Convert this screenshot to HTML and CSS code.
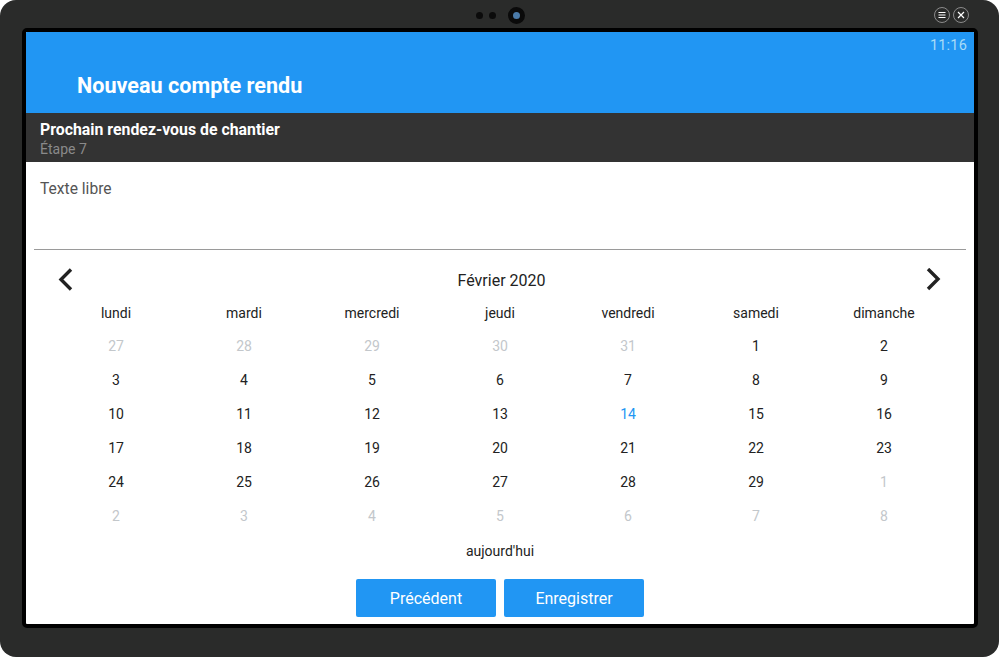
FILE: index.html
```html
<!DOCTYPE html>
<html lang="fr">
<head>
<meta charset="utf-8">
<title>Nouveau compte rendu</title>
<link rel="stylesheet" href="styles.css">
</head>
<body>
<div class="device">
  <div class="bezel-top">
    <span class="dot"></span><span class="dot"></span><span class="cam"></span>
  </div>
  <div class="win-btns">
    <span class="wbtn"><svg width="8" height="8" viewBox="0 0 8 8"><path d="M0.5 1.5h7M0.5 4h7M0.5 6.5h7" stroke="#fff" stroke-width="1.2"/></svg></span>
    <span class="wbtn"><svg width="8" height="8" viewBox="0 0 8 8"><path d="M1 1l6 6M7 1l-6 6" stroke="#fff" stroke-width="1.2"/></svg></span>
  </div>
  <div class="screen">
    <header class="appbar">
      <div class="clock">11:16</div>
      <h1 class="title">Nouveau compte rendu</h1>
    </header>
    <div class="subbar">
      <div class="sub-title">Prochain rendez-vous de chantier</div>
      <div class="sub-step">Étape 7</div>
    </div>
    <div class="field"><span class="field-label">Texte libre</span></div>
    <div class="calendar">
      <div class="cal-nav">
        <svg class="chev chev-prev" width="16" height="24" viewBox="0 0 16 24"><polyline points="13,1.5 3,11.5 13,21.5" fill="none" stroke="#222" stroke-width="3.4"/></svg>
        <span class="month">Février 2020</span>
        <svg class="chev chev-next" width="16" height="24" viewBox="0 0 16 24"><polyline points="3,1 13,11 3,21" fill="none" stroke="#222" stroke-width="3.4"/></svg>
      </div>
      <div class="cal-grid weekdays">
        <span>lundi</span><span>mardi</span><span>mercredi</span><span>jeudi</span><span>vendredi</span><span>samedi</span><span>dimanche</span>
      </div>
      <div class="cal-grid days">
        <span class="out">27</span><span class="out">28</span><span class="out">29</span><span class="out">30</span><span class="out">31</span><span>1</span><span>2</span>
        <span>3</span><span>4</span><span>5</span><span>6</span><span>7</span><span>8</span><span>9</span>
        <span>10</span><span>11</span><span>12</span><span>13</span><span class="today">14</span><span>15</span><span>16</span>
        <span>17</span><span>18</span><span>19</span><span>20</span><span>21</span><span>22</span><span>23</span>
        <span>24</span><span>25</span><span>26</span><span>27</span><span>28</span><span>29</span><span class="out">1</span>
        <span class="out">2</span><span class="out">3</span><span class="out">4</span><span class="out">5</span><span class="out">6</span><span class="out">7</span><span class="out">8</span>
      </div>
      <div class="today-link">aujourd'hui</div>
    </div>
    <div class="actions">
      <button class="btn">Précédent</button>
      <button class="btn">Enregistrer</button>
    </div>
  </div>
</div>
</body>
</html>
```
FILE: styles.css
```css
* { box-sizing: border-box; }
html, body { margin: 0; padding: 0; background: #fff; }
body { font-family: Roboto, "Noto Sans", sans-serif; }

.device {
  position: relative;
  width: 999px;
  height: 657px;
  background: #2a2b2a;
  border-radius: 16px;
  padding: 28px 21px 29px 22px;
}

.bezel-top {
  position: absolute;
  top: 7px;
  left: 476px;
  display: flex;
  align-items: center;
  gap: 6px;
}
.dot { width: 7px; height: 7px; border-radius: 50%; background: #0b0b0b; }
.cam {
  width: 17px; height: 17px; border-radius: 50%;
  background: #4a7aa8;
  border: 5px solid #0a0a0a;
  margin-left: 6px;
}

.win-btns {
  position: absolute;
  top: 7px;
  right: 30px;
  display: flex;
  gap: 3px;
}
.wbtn {
  width: 16px; height: 16px; border-radius: 50%;
  border: 1px solid #8a8a8a;
  display: flex; align-items: center; justify-content: center;
}

.screen {
  width: 956px;
  height: 600px;
  border: 4px solid #000;
  border-radius: 5px;
  background: #fff;
  display: flex;
  flex-direction: column;
  overflow: hidden;
}

.appbar {
  height: 81px;
  background: #2196f3;
  position: relative;
  padding: 0 0 0 51px;
  display: flex;
  align-items: center;
  flex: none;
}
.clock {
  position: absolute;
  top: 5px;
  right: 7px;
  font-size: 14.5px;
  color: #a9dcf7;
  letter-spacing: 0.2px;
}
.title {
  margin: 26px 0 0 0;
  font-size: 21.6px;
  font-weight: 700;
  color: #fff;
}

.subbar {
  height: 49px;
  background: #333;
  padding: 7px 0 0 14px;
  flex: none;
}
.sub-title { font-size: 15.85px; font-weight: 700; color: #fff; line-height: 19px; }
.sub-step { font-size: 14px; color: #8a8a8a; line-height: 18px; padding-top: 1px; }

.field {
  height: 88px;
  margin: 0 8px;
  padding: 17px 6px 0;
  border-bottom: 1px solid #9a9a9a;
  flex: none;
}
.field-label { font-size: 15.6px; color: #555; line-height: 20px; }

.calendar { margin-top: 14px; flex: none; }
.cal-nav {
  height: 32px;
  display: grid;
  grid-template-columns: 1fr auto 1fr;
  align-items: center;
  padding: 0 33px 0 32px;
}
.chev-prev { justify-self: start; }
.chev-next { justify-self: end; }
.month { font-size: 16px; color: #222; margin-left: 4px; }

.cal-grid {
  display: grid;
  grid-template-columns: repeat(7, 128px);
  margin: 0 26px;
  text-align: center;
  font-size: 14px;
  color: #222;
}
.weekdays { height: 33px; align-items: center; }
.days { grid-auto-rows: 34px; align-items: center; }
.days .out { color: #c3c7cb; }
.days .today { color: #2196f3; }

.today-link {
  height: 36px;
  display: flex;
  align-items: center;
  justify-content: center;
  font-size: 14px;
  color: #222;
}

.actions {
  margin-top: 10px;
  display: flex;
  justify-content: center;
  gap: 8px;
  flex: none;
}
.btn {
  width: 140px;
  height: 38px;
  border: none;
  border-radius: 2px;
  background: #2196f3;
  color: #fff;
  font-family: Roboto, "Noto Sans", sans-serif;
  font-size: 16px;
  padding: 0;
}
```
